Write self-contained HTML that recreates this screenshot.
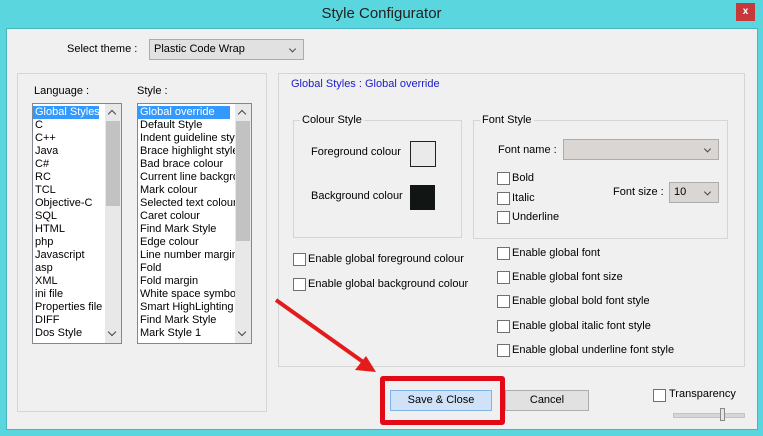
<!DOCTYPE html>
<html><head><style>
body{margin:0;width:763px;height:436px;background:#5ad6df;position:relative;overflow:hidden;font-family:"Liberation Sans",sans-serif;font-size:11px;color:#000}
.a{position:absolute}
.t{position:absolute;white-space:nowrap;font-size:11px}
.win{left:6px;top:28px;width:750px;height:400px;background:#f0f0f0;border:1px solid #49b4bc}
.grp{position:absolute;border:1px solid #d5d5d5}
.gt{position:absolute;background:#f0f0f0;padding:0 2px;font-size:11px;top:-7px;left:6px}
.sel{position:absolute;background:#e1e1e1;border:1px solid #acacac;box-sizing:border-box}
.sel:after{content:"";position:absolute;right:8px;top:50%;width:4px;height:4px;border-right:1.5px solid #444;border-bottom:1.5px solid #444;transform:translateY(-70%) rotate(45deg)}
.cb{position:absolute;width:11px;height:11px;border:1px solid #707070;background:#fff}
.list{position:absolute;background:#fff;border:1px solid #828790;overflow:hidden}
.list .it{height:13px;line-height:13px;padding-left:2px;font-size:11px;white-space:nowrap}
.list .sb{position:absolute;right:0;top:0;bottom:0;width:16px;background:#e8e8e8;height:auto;padding:0}
.list .th{position:absolute;left:1px;width:14px;background:#c2c2c2;padding:0}
.ar{position:absolute;left:4px;width:5px;height:5px;border-left:1.5px solid #444;border-top:1.5px solid #444}
.btn{position:absolute;box-sizing:border-box;text-align:center;line-height:19px;font-size:11px}
</style></head><body>
<div class="t" style="left:0;width:763px;text-align:center;top:5px;font-size:15px;color:#222">Style Configurator</div>
<div class="a" style="left:736px;top:3px;width:19px;height:18px;background:#c7383a;color:#fff;font-size:10px;text-align:center;line-height:18px;font-weight:bold">x</div>
<div class="a win"></div>

<div class="t" style="left:67px;top:43px">Select theme :</div>
<div class="sel" style="left:149px;top:39px;width:155px;height:21px"><span class="t" style="left:4px;top:3px">Plastic Code Wrap</span></div>

<div class="grp" style="left:17px;top:73px;width:248px;height:337px"></div>
<div class="t" style="left:34px;top:85px">Language :</div>
<div class="t" style="left:137px;top:85px">Style :</div>
<div class="list" style="left:32px;top:103px;width:88px;height:237px;padding-top:2px">
<div class="it" style="background:#3399ff;color:#fff;width:64px">Global Styles</div><div class="it">C</div><div class="it">C++</div><div class="it">Java</div><div class="it">C#</div><div class="it">RC</div><div class="it">TCL</div><div class="it">Objective-C</div><div class="it">SQL</div><div class="it">HTML</div><div class="it">php</div><div class="it">Javascript</div><div class="it">asp</div><div class="it">XML</div><div class="it">ini file</div><div class="it">Properties file</div><div class="it">DIFF</div><div class="it">Dos Style</div>
<div class="sb"><div class="th" style="top:17px;height:85px"></div><div class="ar" style="top:7px;transform:rotate(45deg)"></div><div class="ar" style="bottom:8px;transform:rotate(225deg)"></div></div></div>
<div class="list" style="left:137px;top:103px;width:113px;height:237px;padding-top:2px">
<div class="it" style="background:#3399ff;color:#fff;width:90px">Global override</div><div class="it">Default Style</div><div class="it">Indent guideline style</div><div class="it">Brace highlight style</div><div class="it">Bad brace colour</div><div class="it">Current line background</div><div class="it">Mark colour</div><div class="it">Selected text colour</div><div class="it">Caret colour</div><div class="it">Find Mark Style</div><div class="it">Edge colour</div><div class="it">Line number margin</div><div class="it">Fold</div><div class="it">Fold margin</div><div class="it">White space symbol</div><div class="it">Smart HighLighting</div><div class="it">Find Mark Style</div><div class="it">Mark Style 1</div>
<div class="sb"><div class="th" style="top:17px;height:120px"></div><div class="ar" style="top:7px;transform:rotate(45deg)"></div><div class="ar" style="bottom:8px;transform:rotate(225deg)"></div></div></div>

<div class="grp" style="left:278px;top:73px;width:465px;height:292px"></div>
<div class="t" style="left:291px;top:78px;color:#1a1acc">Global Styles : Global override</div>

<div class="grp" style="left:293px;top:120px;width:167px;height:116px"><span class="gt">Colour Style</span></div>
<div class="t" style="left:311px;top:146px">Foreground colour</div>
<div class="a" style="left:410px;top:141px;width:24px;height:24px;border:1px solid #222;background:#eaeaea"></div>
<div class="t" style="left:311px;top:190px">Background colour</div>
<div class="a" style="left:410px;top:185px;width:25px;height:25px;background:#111514"></div>

<div class="grp" style="left:473px;top:120px;width:253px;height:117px"><span class="gt">Font Style</span></div>
<div class="t" style="left:498px;top:144px">Font name :</div>
<div class="sel" style="left:563px;top:139px;width:156px;height:21px;background:#d9d6d3"></div>
<div class="cb" style="left:497px;top:172px"></div><div class="t" style="left:512px;top:172px">Bold</div>
<div class="cb" style="left:497px;top:192px"></div><div class="t" style="left:512px;top:192px">Italic</div>
<div class="cb" style="left:497px;top:211px"></div><div class="t" style="left:512px;top:211px">Underline</div>
<div class="t" style="left:613px;top:186px">Font size :</div>
<div class="sel" style="left:669px;top:182px;width:50px;height:21px;background:#d9d6d3"><span class="t" style="left:4px;top:3px">10</span></div>

<div class="cb" style="left:293px;top:253px"></div><div class="t" style="left:308px;top:253px">Enable global foreground colour</div>
<div class="cb" style="left:293px;top:278px"></div><div class="t" style="left:308px;top:278px">Enable global background colour</div>
<div class="cb" style="left:497px;top:247px"></div><div class="t" style="left:512px;top:247px">Enable global font</div>
<div class="cb" style="left:497px;top:271px"></div><div class="t" style="left:512px;top:271px">Enable global font size</div>
<div class="cb" style="left:497px;top:295px"></div><div class="t" style="left:512px;top:295px">Enable global bold font style</div>
<div class="cb" style="left:497px;top:320px"></div><div class="t" style="left:512px;top:320px">Enable global italic font style</div>
<div class="cb" style="left:497px;top:344px"></div><div class="t" style="left:512px;top:344px">Enable global underline font style</div>

<svg class="a" style="left:0;top:0" width="763" height="436">
<line x1="276" y1="300" x2="366" y2="364" stroke="#e31b1b" stroke-width="4"/>
<polygon points="376,372 355,370 366,356" fill="#e31b1b"/>
</svg>
<div class="btn" style="left:390px;top:390px;width:102px;height:21px;background:#cfe2f7;border:1px solid #7eb4ea">Save &amp; Close</div>
<div class="btn" style="left:505px;top:390px;width:84px;height:21px;background:#e1e1e1;border:1px solid #adadad">Cancel</div>
<div class="a" style="left:380px;top:376px;width:115px;height:39px;border:5px solid #e20a16;border-radius:3px"></div>

<div class="cb" style="left:653px;top:389px"></div><div class="t" style="left:669px;top:388px">Transparency</div>
<div class="a" style="left:673px;top:413px;width:70px;height:3px;background:#d6d6d6;border:1px solid #c4c4c4"></div>
<div class="a" style="left:720px;top:408px;width:3px;height:11px;background:#e6e6e6;border:1px solid #888"></div>
</body></html>
